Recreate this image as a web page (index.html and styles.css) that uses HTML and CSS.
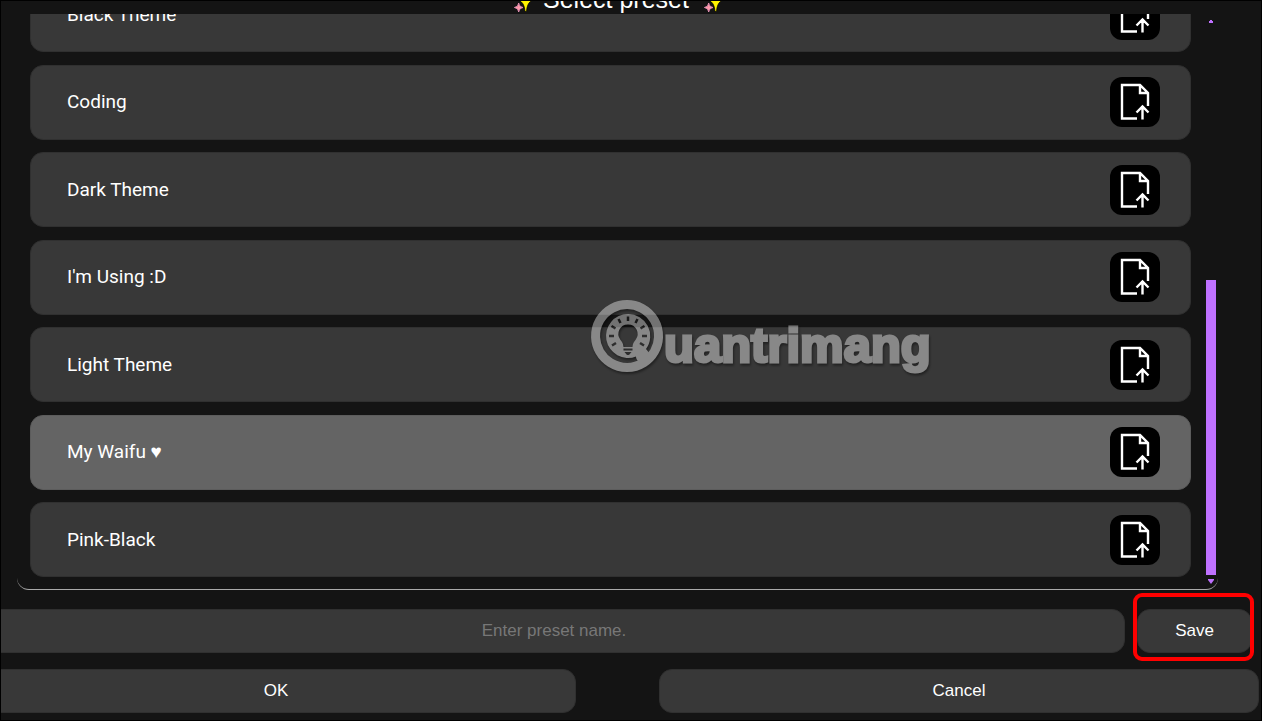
FILE: index.html
```html
<!DOCTYPE html>
<html lang="en">
<head>
<meta charset="utf-8">
<title>Select preset</title>
<link rel="stylesheet" href="styles.css">
</head>
<body>
<svg class="defs" aria-hidden="true">
  <symbol id="load" viewBox="0 0 50 50">
    <path d="M27 41.500H12V8H30L38 16V29M30 8V16H38M32.500 42.500V30M26.500 35.500L32.500 29.500L38.500 35.500" fill="none" stroke="#fff" stroke-width="2.400"/>
  </symbol>
  <symbol id="sparkle" viewBox="0 0 20 22">
    <path d="M14.700 -3Q15.500 5 22 8Q16 10 15.500 19.500H14Q13.500 10 7 8Q14 5 14.700 -3Z" fill="#fff200" stroke="#000" stroke-width=".7"/>
    <path d="M7.700 11Q8 15 12 15.500Q8 16 7.700 20Q7.400 16 3.400 15.500Q7.400 15 7.700 11Z" fill="#f9a" stroke="#f59ac4" stroke-width=".8"/>
  </symbol>
</svg>
<main class="dialog">
  <header class="title">
    <svg class="sparkle" aria-hidden="true"><use href="#sparkle"/></svg>
    <h1>Select preset</h1>
    <svg class="sparkle" aria-hidden="true"><use href="#sparkle"/></svg>
  </header>

  <section class="panel">
    <ul class="presets">
      <li class="preset"><span>Black Theme</span><button class="load" aria-label="Load Black Theme"><svg><use href="#load"/></svg></button></li>
      <li class="preset"><span>Coding</span><button class="load" aria-label="Load Coding"><svg><use href="#load"/></svg></button></li>
      <li class="preset"><span>Dark Theme</span><button class="load" aria-label="Load Dark Theme"><svg><use href="#load"/></svg></button></li>
      <li class="preset"><span>I'm Using :D</span><button class="load" aria-label="Load I'm Using :D"><svg><use href="#load"/></svg></button></li>
      <li class="preset"><span>Light Theme</span><button class="load" aria-label="Load Light Theme"><svg><use href="#load"/></svg></button></li>
      <li class="preset selected"><span>My Waifu ♥</span><button class="load" aria-label="Load My Waifu"><svg><use href="#load"/></svg></button></li>
      <li class="preset"><span>Pink-Black</span><button class="load" aria-label="Load Pink-Black"><svg><use href="#load"/></svg></button></li>
    </ul>
    <div class="scrollbar" aria-hidden="true">
      <svg class="arrow" viewBox="0 0 10 5"><path d="M4 1H6V2H7V4H3V2H4Z"/></svg>
      <div class="track"><div class="thumb"></div></div>
      <svg class="arrow" viewBox="0 0 10 5"><path d="M2 0H8V1L5 5L2 1Z"/></svg>
    </div>
  </section>

  <form class="save-row">
    <input class="field" type="text" aria-label="Preset name" placeholder="Enter preset name.">
    <div class="highlight"><button class="btn" type="button">Save</button></div>
  </form>

  <div class="actions">
    <button class="btn" type="button">OK</button>
    <button class="btn" type="button">Cancel</button>
  </div>

  <div class="watermark">
    <svg viewBox="0 0 74 74" aria-hidden="true">
      <path d="M37 5.500a31.500 31.500 0 1 0 .1 0Z" fill="none" stroke="#fff" stroke-width="9"/>
      <path fill="#fff" fill-rule="evenodd" d="M38 15A22 22 0 1 0 46 57.500C46 62 51 65 55 63C58 61 60 58 60 55L56 50A22 22 0 0 0 38 15ZM38 25.500A9.500 9.500 0 0 1 45.500 41C43 44 43 45 42.500 48H33.500C33 45 33 44 30.500 41A9.500 9.500 0 0 1 38 25.500ZM33.500 49.500H42.500V51.500H33.500ZM34.500 53H41.500L39 56H37Z"/>
      <path d="M38 17.500V22M28.500 20L30.500 24M47.500 20L45.500 24M21.500 27L25.500 29.500M54.500 27L50.500 29.500M19 37H24M57 37H52M22 46.500L26 44M54 46.500L50 44" stroke="#202020" stroke-width="2.500"/>
    </svg>
    <span>uantrimang</span>
  </div>
</main>
</body>
</html>
```
FILE: styles.css
```css
* { box-sizing: border-box; }

body {
  margin: 0;
  background: #141414;
  color: #fff;
  font-family: "Liberation Sans", Arial, sans-serif;
}

.defs { position: absolute; width: 0; height: 0; }

.dialog {
  position: relative;
  display: flex;
  flex-direction: column;
  height: 100vh;
  padding-bottom: 7px;
  border: 1px solid #000;
  overflow: hidden;
}

.title {
  display: flex;
  flex: none;
  align-items: flex-end;
  justify-content: center;
  gap: 12px;
  height: 13px;
  margin: 0 45px 0 15px;
}

.title h1 {
  margin: 0;
  padding-bottom: 2px;
  font-size: 25px;
  font-weight: 400;
  line-height: 26px;
}

.sparkle { width: 20px; height: 22px; }

.panel {
  display: flex;
  flex: 1;
  gap: 15px;
  min-height: 0;
  margin: 0 43px 19px 16px;
  padding: 0 2px 0 13px;
  border-bottom: 1px solid #aaa;
  border-radius: 0 0 12px 12px;
  overflow: hidden;
}

.presets {
  display: flex;
  flex: 1;
  flex-direction: column;
  align-self: flex-end;
  justify-content: space-between;
  height: 612px;
  margin: 0;
  padding: 0 0 12px;
  list-style: none;
}

.preset {
  display: flex;
  align-items: center;
  justify-content: space-between;
  height: 75px;
  padding: 0 30px 0 36px;
  border: 1px solid #303030;
  border-radius: 13px;
  background: #383838;
  font-family: Roboto, sans-serif;
  font-size: 19px;
  line-height: 24px;
}

.preset.selected { background: #646464; border-color: #5c5c5c; }

.load {
  width: 50px;
  height: 50px;
  padding: 0;
  border: 0;
  border-radius: 12px;
  background: #000;
}

.load svg { display: block; width: 50px; height: 50px; }

.scrollbar {
  display: flex;
  flex-direction: column;
  gap: 4px;
  width: 10px;
  padding: 5px 0;
}

.arrow { width: 10px; height: 5px; fill: #bf71ff; }

.track { display: flex; flex: 1; flex-direction: column; justify-content: flex-end; }

.thumb { height: 54%; background: #bf71ff; }

.field, .btn {
  height: 44px;
  border: 1px solid #303030;
  border-radius: 13px;
  background: #383838;
  color: #fff;
  font-family: inherit;
  font-size: 17px;
}

.save-row {
  display: flex;
  flex: none;
  gap: 12px;
  margin: 0 9px 16px -18px;
}

.field {
  flex: 1;
  min-width: 0;
  padding: 0 12px;
  text-align: center;
}

.field::placeholder { color: #777; opacity: 1; }

.btn { padding: 0 6px; }

.highlight { position: relative; width: 115px; }
.highlight .btn { width: 100%; }

.highlight::after {
  content: "";
  position: absolute;
  inset: -16px -2px -8px -4px;
  border: 4px solid #f00;
  border-radius: 9px;
  pointer-events: none;
}

.actions {
  display: grid;
  flex: none;
  grid-template-columns: 1fr 1fr;
  gap: 83px;
  margin: 0 2px 0 -25px;
}

.watermark {
  position: absolute;
  top: 298px;
  left: 589px;
  display: flex;
  align-items: center;
  opacity: .4;
  filter: drop-shadow(1px 2px 1px #000);
  pointer-events: none;
}

.watermark svg { width: 74px; height: 74px; }

.watermark span {
  font-size: 49px;
  font-weight: 700;
  line-height: 56px;
  padding-top: 18px;
  -webkit-text-stroke: 3px #fff;
}
```
